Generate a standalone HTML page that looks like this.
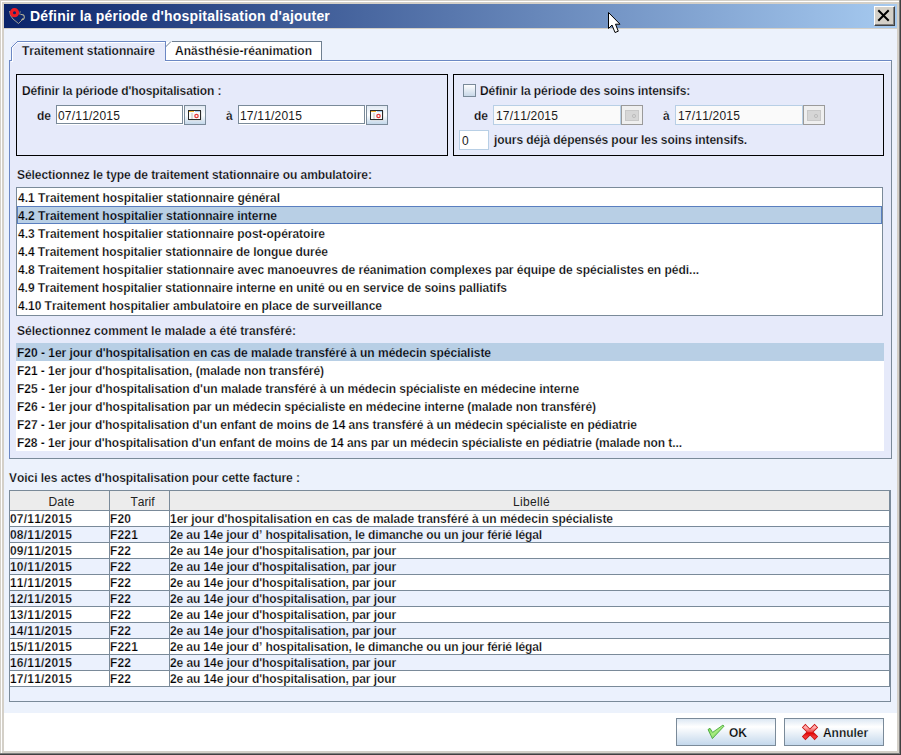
<!DOCTYPE html>
<html><head><meta charset="utf-8">
<style>
*{margin:0;padding:0;box-sizing:border-box}
html,body{width:901px;height:755px;overflow:hidden;background:#d4d0c8;font-family:"Liberation Sans",sans-serif;color:#111}
.a{position:absolute}
.t{position:absolute;white-space:pre;font-size:12px;line-height:14px;font-weight:bold;font-kerning:none;color:#000}
.nw{font-weight:normal;-webkit-text-stroke:0.3px #111;color:#111}
</style></head><body>
<div class="a" style="left:1px;top:1px;width:899px;height:753px;border-top:1px solid #fff;border-left:1px solid #fff"></div>
<div class="a" style="left:0px;top:0px;width:901px;height:755px;border-right:1px solid #404040;border-bottom:1px solid #404040"></div>
<div class="a" style="left:0px;top:0px;width:900px;height:754px;border-right:1px solid #808080;border-bottom:1px solid #808080"></div>
<div class="a" style="left:4px;top:4px;width:893px;height:24px;background:linear-gradient(to right,#0a246a,#a6caf0)"></div>
<svg class="a" style="left:6px;top:5px" width="24" height="22" viewBox="0 0 24 22">
 <path d="M3.5 6 Q3.8 11 7 14 L12.5 18.5 L16 15 L17 13" fill="none" stroke="#b0ac98" stroke-width="0.9"/>
 <path d="M14.3 6.2 L13.6 9.5" fill="none" stroke="#8a9080" stroke-width="0.9"/>
 <path d="M14.5 9.5 Q18.5 9 18.3 12.5 Q18 15 15.5 14.5" fill="none" stroke="#b8b49c" stroke-width="1.1"/>
 <circle cx="8.5" cy="7.7" r="3.1" fill="none" stroke="#ee1c24" stroke-width="3.1"/>
</svg>
<div class="t" style="left:30px;top:8px;font-size:14px;line-height:16px;letter-spacing:0.188px;color:#fff">Définir la période d'hospitalisation d'ajouter</div>
<div class="a" style="left:874px;top:6px;width:21px;height:20px;background:#d4d0c8;border-top:1px solid #fff;border-left:1px solid #fff;border-right:1px solid #404040;border-bottom:1px solid #404040"></div>
<div class="a" style="left:875px;top:7px;width:19px;height:18px;border-right:1px solid #808080;border-bottom:1px solid #808080"></div>
<svg class="a" style="left:874px;top:6px" width="21" height="20" viewBox="0 0 21 20">
 <path d="M5 5 L14 14 M14 5 L5 14" stroke="#000" stroke-width="2" stroke-linecap="square"/>
</svg>
<div class="a" style="left:4px;top:29px;width:893px;height:684px;background:#ecf2fc"></div>
<div class="a" style="left:4px;top:713px;width:893px;height:38px;background:#fff"></div>
<div class="a" style="left:9px;top:60px;width:883px;height:399px;background:#e6eafa;border-left:1px solid #6c88c4;border-top:1px solid #6c88c4;border-right:1px solid #7a8a99;border-bottom:1px solid #7a8a99"></div>
<div class="a" style="left:10px;top:61px;width:881px;height:1px;background:#fff"></div>
<div class="a" style="left:166px;top:42px;width:155px;height:18px;background:#fff"></div>
<div class="a" style="left:171px;top:41px;width:151px;height:1px;background:#6e7f90"></div>
<div class="a" style="left:321px;top:41px;width:1px;height:19px;background:#6e7f90"></div>
<svg class="a" style="left:165px;top:41px" width="7" height="7" viewBox="0 0 7 7"><path d="M0 6 L6 0 L7 0 L7 7 L0 7 Z" fill="#fff"/><path d="M0.5 6 L6 0.5" stroke="#6e7f90" stroke-width="1"/></svg>
<div class="a" style="left:165px;top:47px;width:1px;height:13px;background:#6e7f90"></div>
<div class="a" style="left:12px;top:42px;width:153px;height:20px;background:#e6eafa"></div>
<div class="a" style="left:17px;top:41px;width:149px;height:1px;background:#6c88c4"></div>
<div class="a" style="left:165px;top:41px;width:1px;height:20px;background:#6c88c4"></div>
<div class="a" style="left:11px;top:47px;width:1px;height:14px;background:#6c88c4"></div>
<div class="a" style="left:9px;top:60px;width:3px;height:1px;background:#6c88c4"></div>
<div class="a" style="left:17px;top:42px;width:148px;height:1px;background:#fff"></div>
<div class="a" style="left:12px;top:47px;width:1px;height:15px;background:#fff"></div>
<svg class="a" style="left:11px;top:41px" width="7" height="7" viewBox="0 0 7 7"><path d="M1 7 L1 6 L6 1 L7 1 L7 7 Z" fill="#e6eafa"/><path d="M0.5 6.5 L6.5 0.5" stroke="#6c88c4" stroke-width="1"/><path d="M1.5 6.5 L6.5 1.5" stroke="#fff" stroke-width="1"/></svg>
<div class="a" style="left:10px;top:61px;width:1px;height:1px;background:#e6eafa"></div>
<div class="t" style="left:22px;top:44px;letter-spacing:0.013px;-webkit-text-stroke:0.25px #e6eafa">Traitement stationnaire</div>
<div class="t" style="left:175px;top:44px;letter-spacing:0.044px;-webkit-text-stroke:0.25px #fff">Anästhésie-réanimation</div>
<div class="a" style="left:16px;top:74px;width:432px;height:82px;border:1px solid #000"></div>
<div class="t" style="left:22px;top:84px;letter-spacing:-0.110px;-webkit-text-stroke:0.25px #e6eafa">Définir la période d'hospitalisation :</div>
<div class="t" style="left:37px;top:109px;letter-spacing:-0.002px;-webkit-text-stroke:0.25px #e6eafa">de</div>
<div class="a" style="left:56px;top:105px;width:127px;height:19px;background:#fff;border:1px solid #7a8a99;box-shadow:1px 1px 0 #fff"></div>
<div class="t nw" style="left:58px;top:109px;letter-spacing:0.194px;-webkit-text-stroke:0;color:#1a1a1a">07/11/2015</div>
<div class="a" style="left:184px;top:105px;width:22px;height:20px;background:linear-gradient(#e2eaf3,#fcfdfe 50%,#c4d8ea);border:1px solid #7a8a99"></div>
<svg class="a" style="left:188px;top:110px" width="14" height="11" viewBox="0 0 14 11">
 <rect x="1" y="1" width="13" height="10" fill="#d8d8d8" opacity="0.6"/>
 <rect x="0.5" y="0.5" width="12" height="9" fill="#fafafa" stroke="#2a2a2a" stroke-width="1"/>
 <rect x="1" y="1" width="5" height="1" fill="#f0b030"/>
 <rect x="7" y="1" width="5" height="1" fill="#a8cef0"/>
 <rect x="3" y="3" width="2" height="6" fill="#dcdcdc"/>
 <circle cx="8.5" cy="6" r="1.7" fill="none" stroke="#e83838" stroke-width="1.2"/>
</svg>
<div class="t" style="left:226px;top:109px;letter-spacing:0.326px;-webkit-text-stroke:0.25px #e6eafa">à</div>
<div class="a" style="left:238px;top:105px;width:127px;height:19px;background:#fff;border:1px solid #7a8a99;box-shadow:1px 1px 0 #fff"></div>
<div class="t nw" style="left:240px;top:109px;letter-spacing:0.194px;-webkit-text-stroke:0;color:#1a1a1a">17/11/2015</div>
<div class="a" style="left:366px;top:105px;width:22px;height:20px;background:linear-gradient(#e2eaf3,#fcfdfe 50%,#c4d8ea);border:1px solid #7a8a99"></div>
<svg class="a" style="left:370px;top:110px" width="14" height="11" viewBox="0 0 14 11">
 <rect x="1" y="1" width="13" height="10" fill="#d8d8d8" opacity="0.6"/>
 <rect x="0.5" y="0.5" width="12" height="9" fill="#fafafa" stroke="#2a2a2a" stroke-width="1"/>
 <rect x="1" y="1" width="5" height="1" fill="#f0b030"/>
 <rect x="7" y="1" width="5" height="1" fill="#a8cef0"/>
 <rect x="3" y="3" width="2" height="6" fill="#dcdcdc"/>
 <circle cx="8.5" cy="6" r="1.7" fill="none" stroke="#e83838" stroke-width="1.2"/>
</svg>
<div class="a" style="left:453px;top:74px;width:431px;height:82px;border:1px solid #000"></div>
<div class="a" style="left:463px;top:84px;width:13px;height:13px;background:linear-gradient(#fdfdfe,#c8d8e8);border:1px solid #7a8a99"></div>
<div class="t" style="left:480px;top:84px;letter-spacing:-0.080px;-webkit-text-stroke:0.25px #e6eafa">Définir la période des soins intensifs:</div>
<div class="t" style="left:474px;top:109px;letter-spacing:-0.002px;-webkit-text-stroke:0.25px #e6eafa">de</div>
<div class="a" style="left:493px;top:105px;width:128px;height:20px;background:#fafafa;border:1px solid #b8cfe5"></div>
<div class="t nw" style="left:496px;top:109px;letter-spacing:0.194px;-webkit-text-stroke:0;color:#1a1a1a">17/11/2015</div>
<div class="a" style="left:621px;top:105px;width:22px;height:20px;background:#efefef;border:1px solid #9a9a9a"></div>
<svg class="a" style="left:625px;top:110px" width="14" height="11" viewBox="0 0 14 11">
 <rect x="0.5" y="0.5" width="13" height="10" fill="#d6d6d6" stroke="#c8c8c8" stroke-width="1"/>
 <circle cx="9" cy="6" r="1.6" fill="none" stroke="#bdbdbd" stroke-width="1"/>
</svg>
<div class="t" style="left:663px;top:109px;letter-spacing:0.326px;-webkit-text-stroke:0.25px #e6eafa">à</div>
<div class="a" style="left:675px;top:105px;width:128px;height:20px;background:#fafafa;border:1px solid #b8cfe5"></div>
<div class="t nw" style="left:678px;top:109px;letter-spacing:0.194px;-webkit-text-stroke:0;color:#1a1a1a">17/11/2015</div>
<div class="a" style="left:803px;top:105px;width:22px;height:20px;background:#efefef;border:1px solid #9a9a9a"></div>
<svg class="a" style="left:807px;top:110px" width="14" height="11" viewBox="0 0 14 11">
 <rect x="0.5" y="0.5" width="13" height="10" fill="#d6d6d6" stroke="#c8c8c8" stroke-width="1"/>
 <circle cx="9" cy="6" r="1.6" fill="none" stroke="#bdbdbd" stroke-width="1"/>
</svg>
<div class="a" style="left:459px;top:130px;width:30px;height:20px;background:#fff;border:1px solid #b8cfe5"></div>
<div class="t nw" style="left:462px;top:134px;letter-spacing:0.326px;-webkit-text-stroke:0;color:#1a1a1a">0</div>
<div class="t" style="left:494px;top:133px;letter-spacing:-0.067px;-webkit-text-stroke:0.25px #e6eafa">jours déjà dépensés pour les soins intensifs.</div>
<div class="t" style="left:17px;top:168px;letter-spacing:-0.050px;-webkit-text-stroke:0.25px #e6eafa">Sélectionnez le type de traitement stationnaire ou ambulatoire:</div>
<div class="a" style="left:16px;top:187px;width:867px;height:129px;background:#fff;border:1px solid #7a8a99"></div>
<div class="a" style="left:17px;top:206px;width:865px;height:18px;background:#b8cfe5;border:1px solid #5a7fc0"></div>
<div class="t" style="left:18px;top:191px;letter-spacing:-0.016px;-webkit-text-stroke:0.25px #fff">4.1 Traitement hospitalier stationnaire général</div>
<div class="t" style="left:18px;top:209px;letter-spacing:-0.023px;-webkit-text-stroke:0.25px #b8cfe5">4.2 Traitement hospitalier stationnaire interne</div>
<div class="t" style="left:18px;top:227px;letter-spacing:-0.019px;-webkit-text-stroke:0.25px #fff">4.3 Traitement hospitalier stationnaire post-opératoire</div>
<div class="t" style="left:18px;top:245px;letter-spacing:-0.050px;-webkit-text-stroke:0.25px #fff">4.4 Traitement hospitalier stationnaire de longue durée</div>
<div class="t" style="left:18px;top:263px;letter-spacing:-0.016px;-webkit-text-stroke:0.25px #fff">4.8 Traitement hospitalier stationnaire avec manoeuvres de réanimation complexes par équipe de spécialistes en pédi...</div>
<div class="t" style="left:18px;top:281px;letter-spacing:-0.050px;-webkit-text-stroke:0.25px #fff">4.9 Traitement hospitalier stationnaire interne en unité ou en service de soins palliatifs</div>
<div class="t" style="left:18px;top:299px;letter-spacing:-0.013px;-webkit-text-stroke:0.25px #fff">4.10 Traitement hospitalier ambulatoire en place de surveillance</div>
<div class="t" style="left:17px;top:324px;letter-spacing:0.033px;-webkit-text-stroke:0.25px #e6eafa">Sélectionnez comment le malade a été transféré:</div>
<div class="a" style="left:16px;top:343px;width:868px;height:108px;background:#fff"></div>
<div class="a" style="left:16px;top:343px;width:868px;height:18px;background:#b8cfe5"></div>
<div class="t" style="left:17px;top:346px;letter-spacing:-0.020px;-webkit-text-stroke:0.25px #b8cfe5">F20 - 1er jour d'hospitalisation en cas de malade transféré à un médecin spécialiste</div>
<div class="t" style="left:17px;top:364px;letter-spacing:-0.046px;-webkit-text-stroke:0.25px #fff">F21 - 1er jour d'hospitalisation, (malade non transféré)</div>
<div class="t" style="left:17px;top:382px;letter-spacing:-0.032px;-webkit-text-stroke:0.25px #fff">F25 - 1er jour d'hospitalisation d'un malade transféré à un médecin spécialiste en médecine interne</div>
<div class="t" style="left:17px;top:400px;letter-spacing:-0.033px;-webkit-text-stroke:0.25px #fff">F26 - 1er jour d'hospitalisation par un médecin spécialiste en médecine interne (malade non transféré)</div>
<div class="t" style="left:17px;top:418px;letter-spacing:-0.047px;-webkit-text-stroke:0.25px #fff">F27 - 1er jour d'hospitalisation d'un enfant de moins de 14 ans transféré à un médecin spécialiste en pédiatrie</div>
<div class="t" style="left:17px;top:436px;letter-spacing:-0.074px;-webkit-text-stroke:0.25px #fff">F28 - 1er jour d'hospitalisation d'un enfant de moins de 14 ans par un médecin spécialiste en pédiatrie (malade non t...</div>
<div class="t" style="left:9px;top:471px;letter-spacing:-0.036px;-webkit-text-stroke:0.25px #ecf2fc">Voici les actes d'hospitalisation pour cette facture :</div>
<div class="a" style="left:9px;top:490px;width:882px;height:212px;background:#ebf1fd;border:1px solid #7a8a99"></div>
<div class="a" style="left:10px;top:491px;width:880px;height:20px;background:#ececec;border-bottom:1px solid #7a8a99"></div>
<div class="t nw" style="left:12px;top:495px;letter-spacing:0.163px;width:99px;text-align:center;-webkit-text-stroke:0;color:#222">Date</div>
<div class="t nw" style="left:113px;top:495px;width:59px;text-align:center;-webkit-text-stroke:0;color:#222">Tarif</div>
<div class="t nw" style="left:172px;top:495px;letter-spacing:0.330px;width:719px;text-align:center;-webkit-text-stroke:0;color:#222">Libellé</div>
<div class="a" style="left:10px;top:511px;width:879px;height:16px;background:#fff;border-bottom:1px solid #7a8a99"></div>
<div class="t" style="left:10px;top:512px;letter-spacing:0.194px;-webkit-text-stroke:0.25px #fff">07/11/2015</div>
<div class="t" style="left:110px;top:512px;letter-spacing:0.107px;-webkit-text-stroke:0.25px #fff">F20</div>
<div class="t" style="left:170px;top:512px;letter-spacing:-0.017px;-webkit-text-stroke:0.25px #fff">1er jour d'hospitalisation en cas de malade transféré à un médecin spécialiste</div>
<div class="a" style="left:10px;top:527px;width:879px;height:16px;background:#ebf1fd;border-bottom:1px solid #7a8a99"></div>
<div class="t" style="left:10px;top:528px;letter-spacing:0.194px;-webkit-text-stroke:0.25px #ebf1fd">08/11/2015</div>
<div class="t" style="left:110px;top:528px;letter-spacing:0.162px;-webkit-text-stroke:0.25px #ebf1fd">F221</div>
<div class="t" style="left:170px;top:528px;letter-spacing:-0.108px;-webkit-text-stroke:0.25px #ebf1fd">2e au 14e jour d’ hospitalisation, le dimanche ou un jour férié légal</div>
<div class="a" style="left:10px;top:543px;width:879px;height:16px;background:#fff;border-bottom:1px solid #7a8a99"></div>
<div class="t" style="left:10px;top:544px;letter-spacing:0.194px;-webkit-text-stroke:0.25px #fff">09/11/2015</div>
<div class="t" style="left:110px;top:544px;letter-spacing:0.107px;-webkit-text-stroke:0.25px #fff">F22</div>
<div class="t" style="left:170px;top:544px;letter-spacing:-0.085px;-webkit-text-stroke:0.25px #fff">2e au 14e jour d'hospitalisation, par jour</div>
<div class="a" style="left:10px;top:559px;width:879px;height:16px;background:#ebf1fd;border-bottom:1px solid #7a8a99"></div>
<div class="t" style="left:10px;top:560px;letter-spacing:0.194px;-webkit-text-stroke:0.25px #ebf1fd">10/11/2015</div>
<div class="t" style="left:110px;top:560px;letter-spacing:0.107px;-webkit-text-stroke:0.25px #ebf1fd">F22</div>
<div class="t" style="left:170px;top:560px;letter-spacing:-0.085px;-webkit-text-stroke:0.25px #ebf1fd">2e au 14e jour d'hospitalisation, par jour</div>
<div class="a" style="left:10px;top:575px;width:879px;height:16px;background:#fff;border-bottom:1px solid #7a8a99"></div>
<div class="t" style="left:10px;top:576px;letter-spacing:0.194px;-webkit-text-stroke:0.25px #fff">11/11/2015</div>
<div class="t" style="left:110px;top:576px;letter-spacing:0.107px;-webkit-text-stroke:0.25px #fff">F22</div>
<div class="t" style="left:170px;top:576px;letter-spacing:-0.085px;-webkit-text-stroke:0.25px #fff">2e au 14e jour d'hospitalisation, par jour</div>
<div class="a" style="left:10px;top:591px;width:879px;height:16px;background:#ebf1fd;border-bottom:1px solid #7a8a99"></div>
<div class="t" style="left:10px;top:592px;letter-spacing:0.194px;-webkit-text-stroke:0.25px #ebf1fd">12/11/2015</div>
<div class="t" style="left:110px;top:592px;letter-spacing:0.107px;-webkit-text-stroke:0.25px #ebf1fd">F22</div>
<div class="t" style="left:170px;top:592px;letter-spacing:-0.085px;-webkit-text-stroke:0.25px #ebf1fd">2e au 14e jour d'hospitalisation, par jour</div>
<div class="a" style="left:10px;top:607px;width:879px;height:16px;background:#fff;border-bottom:1px solid #7a8a99"></div>
<div class="t" style="left:10px;top:608px;letter-spacing:0.194px;-webkit-text-stroke:0.25px #fff">13/11/2015</div>
<div class="t" style="left:110px;top:608px;letter-spacing:0.107px;-webkit-text-stroke:0.25px #fff">F22</div>
<div class="t" style="left:170px;top:608px;letter-spacing:-0.085px;-webkit-text-stroke:0.25px #fff">2e au 14e jour d'hospitalisation, par jour</div>
<div class="a" style="left:10px;top:623px;width:879px;height:16px;background:#ebf1fd;border-bottom:1px solid #7a8a99"></div>
<div class="t" style="left:10px;top:624px;letter-spacing:0.194px;-webkit-text-stroke:0.25px #ebf1fd">14/11/2015</div>
<div class="t" style="left:110px;top:624px;letter-spacing:0.107px;-webkit-text-stroke:0.25px #ebf1fd">F22</div>
<div class="t" style="left:170px;top:624px;letter-spacing:-0.085px;-webkit-text-stroke:0.25px #ebf1fd">2e au 14e jour d'hospitalisation, par jour</div>
<div class="a" style="left:10px;top:639px;width:879px;height:16px;background:#fff;border-bottom:1px solid #7a8a99"></div>
<div class="t" style="left:10px;top:640px;letter-spacing:0.194px;-webkit-text-stroke:0.25px #fff">15/11/2015</div>
<div class="t" style="left:110px;top:640px;letter-spacing:0.162px;-webkit-text-stroke:0.25px #fff">F221</div>
<div class="t" style="left:170px;top:640px;letter-spacing:-0.108px;-webkit-text-stroke:0.25px #fff">2e au 14e jour d’ hospitalisation, le dimanche ou un jour férié légal</div>
<div class="a" style="left:10px;top:655px;width:879px;height:16px;background:#ebf1fd;border-bottom:1px solid #7a8a99"></div>
<div class="t" style="left:10px;top:656px;letter-spacing:0.194px;-webkit-text-stroke:0.25px #ebf1fd">16/11/2015</div>
<div class="t" style="left:110px;top:656px;letter-spacing:0.107px;-webkit-text-stroke:0.25px #ebf1fd">F22</div>
<div class="t" style="left:170px;top:656px;letter-spacing:-0.085px;-webkit-text-stroke:0.25px #ebf1fd">2e au 14e jour d'hospitalisation, par jour</div>
<div class="a" style="left:10px;top:671px;width:879px;height:16px;background:#fff;border-bottom:1px solid #7a8a99"></div>
<div class="t" style="left:10px;top:672px;letter-spacing:0.194px;-webkit-text-stroke:0.25px #fff">17/11/2015</div>
<div class="t" style="left:110px;top:672px;letter-spacing:0.107px;-webkit-text-stroke:0.25px #fff">F22</div>
<div class="t" style="left:170px;top:672px;letter-spacing:-0.085px;-webkit-text-stroke:0.25px #fff">2e au 14e jour d'hospitalisation, par jour</div>
<div class="a" style="left:109px;top:491px;width:1px;height:196px;background:#7a8a99"></div>
<div class="a" style="left:169px;top:491px;width:1px;height:196px;background:#7a8a99"></div>
<div class="a" style="left:889px;top:491px;width:1px;height:196px;background:#7a8a99"></div>
<div class="a" style="left:676px;top:718px;width:100px;height:28px;border:1px solid #7a8a99;background:linear-gradient(#dde8f3,#fff 30%,#c4d8ec)"></div>
<div class="t" style="left:729px;top:726px;-webkit-text-stroke:0.25px #eef4fa">OK</div>
<svg class="a" style="left:704px;top:720px" width="24" height="22" viewBox="0 0 24 22">
 <defs><linearGradient id="gck" x1="0" y1="0" x2="1" y2="1"><stop offset="0" stop-color="#6fd24a"/><stop offset="0.5" stop-color="#a8ec80"/><stop offset="1" stop-color="#3cb032"/></linearGradient></defs>
 <path d="M4 9.5 L6 8.3 L8.6 12.4 L19 5 L20 6.2 L8.4 18.6 Z" fill="url(#gck)" stroke="#3aa02e" stroke-width="0.8" stroke-linejoin="round"/>
</svg>
<div class="a" style="left:784px;top:718px;width:100px;height:28px;border:1px solid #7a8a99;background:linear-gradient(#dde8f3,#fff 30%,#c4d8ec)"></div>
<div class="t" style="left:823px;top:726px;letter-spacing:-0.048px;-webkit-text-stroke:0.25px #eef4fa">Annuler</div>
<svg class="a" style="left:798px;top:720px" width="24" height="24" viewBox="0 0 24 24">
 <defs><linearGradient id="gx" x1="0" y1="0" x2="0" y2="1"><stop offset="0" stop-color="#ffb0b0"/><stop offset="0.45" stop-color="#f05050"/><stop offset="0.6" stop-color="#e00000"/><stop offset="1" stop-color="#f03838"/></linearGradient></defs>
 <path d="M7.4 7.4 L16.6 16.6 M16.6 7.4 L7.4 16.6" stroke="#c81010" stroke-width="5" stroke-linecap="square"/>
 <path d="M7.4 7.4 L16.6 16.6 M16.6 7.4 L7.4 16.6" stroke="url(#gx)" stroke-width="3.4" stroke-linecap="square"/>
</svg>
<svg class="a" style="left:606px;top:10px" width="16" height="25" viewBox="0 0 16 25">
 <path d="M2.5 2.5 L2.5 18.5 L6 15 L9 22.5 L12.3 21.2 L9.5 14.2 L14 14.2 Z" fill="#fff" stroke="#000" stroke-width="1" stroke-linejoin="miter"/>
</svg>
</body></html>
